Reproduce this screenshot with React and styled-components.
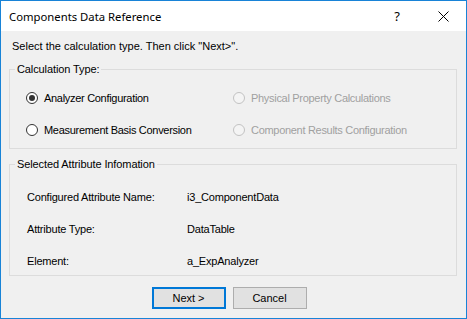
import React from 'react';
import styled, { createGlobalStyle } from 'styled-components';

const GlobalStyle = createGlobalStyle`
  * { box-sizing: border-box; }
  body {
    margin: 0;
    background: #ffffff;
    font-family: 'Liberation Sans', Arial, sans-serif;
  }
`;

const Window = styled.div`
  width: 467px;
  height: 319px;
  border: 1px solid #1883d7;
  display: flex;
  flex-direction: column;
  background: #f0f0f0;
`;

const TitleBar = styled.div`
  height: 30px;
  flex: none;
  background: #ffffff;
  display: flex;
  align-items: center;
  padding-left: 8px;
`;

const Title = styled.div`
  flex: 1;
  font-family: 'Noto Sans', 'Open Sans', sans-serif;
  font-size: 11.3px;
  color: #000;
  padding-top: 1px;
`;

const CaptionButton = styled.div`
  width: 46px;
  height: 30px;
  display: flex;
  align-items: center;
  justify-content: center;
  font-family: 'Noto Sans', sans-serif;
  font-size: 13px;
  color: #000;
`;

const Body = styled.div`
  flex: 1;
  display: flex;
  flex-direction: column;
  padding: 9px 9px 0 8px;
  font-size: 11px;
  line-height: 13px;
  color: #000;
`;

const Instruction = styled.div`
  margin-left: 3px;
  height: 13px;
`;

const Group = styled.fieldset`
  margin: ${(p) => p.$top}px 0 0 0;
  border: 1px solid #dcdcdc;
  padding: ${(p) => p.$padTop}px 0 ${(p) => p.$padBottom}px 0;
  min-width: 0;
`;

const Legend = styled.legend`
  margin-left: 5px;
  padding: 0 2px;
  font-size: 11px;
  line-height: 13px;
  letter-spacing: -0.1px;
`;

const OptionGrid = styled.div`
  display: grid;
  grid-template-columns: 207px 1fr;
  row-gap: 16px;
  padding-left: 16px;
`;

const Option = styled.label`
  height: 16px;
  display: flex;
  align-items: center;
  gap: 6px;
  letter-spacing: -0.3px;
  color: ${(p) => (p.$disabled ? '#a0a0a0' : '#000')};
`;

const RadioCircle = styled.span`
  width: 12px;
  height: 12px;
  border-radius: 50%;
  flex: none;
  border: 1px solid ${(p) => (p.$disabled ? '#c2c2c2' : '#333333')};
  background: ${(p) => (p.$disabled ? '#f4f4f4' : '#ffffff')};
  display: flex;
  align-items: center;
  justify-content: center;
  &::after {
    content: '';
    width: 6px;
    height: 6px;
    border-radius: 50%;
    background: #333333;
    display: ${(p) => (p.$checked ? 'block' : 'none')};
  }
`;

const InfoGrid = styled.div`
  display: grid;
  grid-template-columns: 160px 1fr;
  row-gap: 16px;
  padding-left: 17px;
`;

const InfoCell = styled.div`
  height: 16px;
  display: flex;
  align-items: center;
  letter-spacing: -0.2px;
`;

const Footer = styled.div`
  display: flex;
  justify-content: center;
  gap: 7px;
  margin-top: 11px;
  padding-right: 8px;
`;

const Button = styled.div`
  width: 74px;
  height: 22px;
  display: flex;
  align-items: center;
  justify-content: center;
  background: #e1e1e1;
  border: 1px solid ${(p) => (p.$default ? '#0078d7' : '#adadad')};
  box-shadow: ${(p) => (p.$default ? 'inset 0 0 0 1px #0078d7' : 'none')};
  font-size: 11px;
  color: #000;
`;

function Radio({ label, checked, disabled }) {
  return (
    <Option $disabled={disabled}>
      <RadioCircle $checked={checked} $disabled={disabled} />
      {label}
    </Option>
  );
}

const info = [
  ['Configured Attribute Name:', 'i3_ComponentData'],
  ['Attribute Type:', 'DataTable'],
  ['Element:', 'a_ExpAnalyzer'],
];

export default function App() {
  return (
    <>
      <GlobalStyle />
      <Window>
        <TitleBar>
          <Title>Components Data Reference</Title>
          <CaptionButton>?</CaptionButton>
          <CaptionButton>
            <svg width="11" height="11" viewBox="0 0 11 11">
              <path d="M0.5 0.5 L10.5 10.5 M10.5 0.5 L0.5 10.5" stroke="#000" strokeWidth="1" fill="none" />
            </svg>
          </CaptionButton>
        </TitleBar>
        <Body>
          <Instruction>Select the calculation type. Then click "Next&gt;".</Instruction>
          <Group $top={10} $padTop={14} $padBottom={10}>
            <Legend>Calculation Type:</Legend>
            <OptionGrid>
              <Radio label="Analyzer Configuration" checked />
              <Radio label="Physical Property Calculations" disabled />
              <Radio label="Measurement Basis Conversion" />
              <Radio label="Component Results Configuration" disabled />
            </OptionGrid>
          </Group>
          <Group $top={9} $padTop={18} $padBottom={6}>
            <Legend>Selected Attribute Infomation</Legend>
            <InfoGrid>
              {info.map(([k, v]) => (
                <React.Fragment key={k}>
                  <InfoCell>{k}</InfoCell>
                  <InfoCell>{v}</InfoCell>
                </React.Fragment>
              ))}
            </InfoGrid>
          </Group>
          <Footer>
            <Button $default>Next &gt;</Button>
            <Button>Cancel</Button>
          </Footer>
        </Body>
      </Window>
    </>
  );
}
